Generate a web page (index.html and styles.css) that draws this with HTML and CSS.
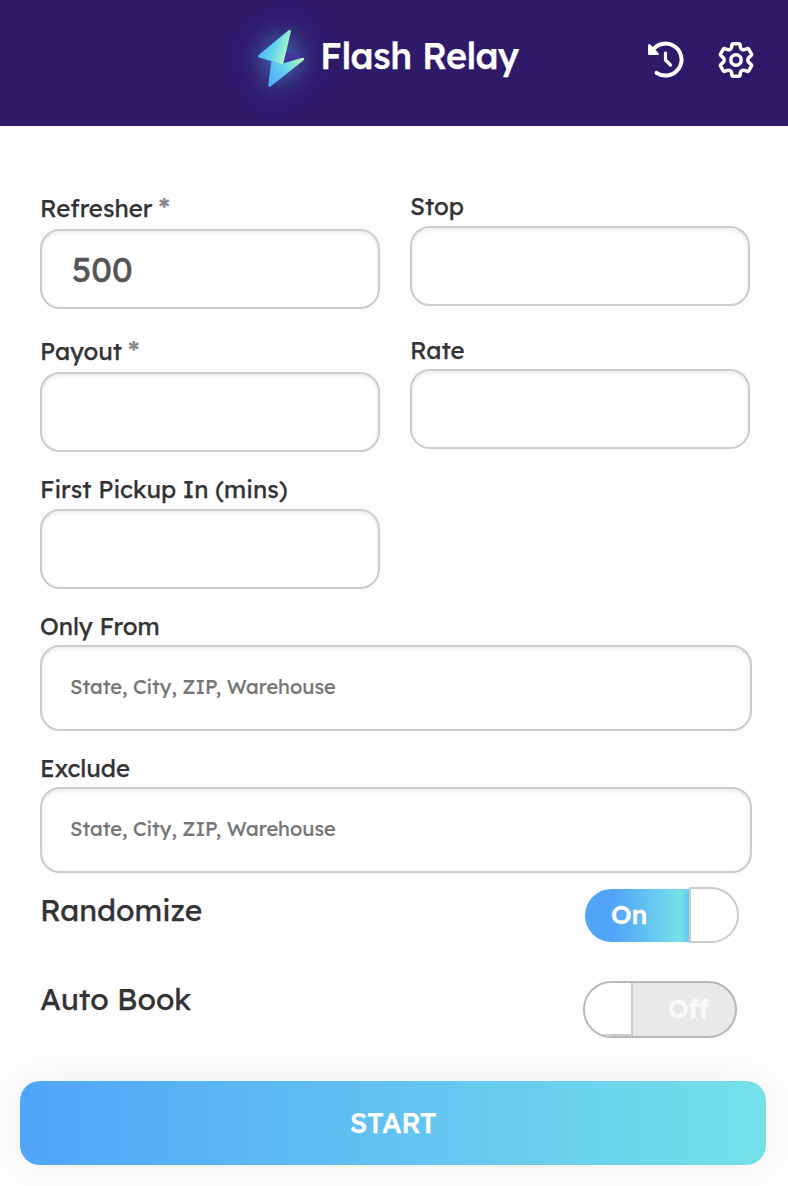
FILE: index.html
```
<!DOCTYPE html>
<html lang="en">
<head>
<meta charset="utf-8">
<title>Flash Relay</title>
<link rel="stylesheet" href="styles.css">
</head>
<body>
<header class="header">
  <div class="brand">
    <svg class="logo" width="50" height="62" viewBox="256 28 50 62">
      <defs>
        <linearGradient id="top" x1="262" y1="42" x2="287" y2="50" gradientUnits="userSpaceOnUse"><stop offset="0" stop-color="#4fb4f8"/><stop offset=".5" stop-color="#62d4ee"/><stop offset="1" stop-color="#a4f5c8"/></linearGradient>
        <linearGradient id="low" x1="267" y1="82" x2="304" y2="60" gradientUnits="userSpaceOnUse"><stop offset="0" stop-color="#4fa8fb"/><stop offset=".5" stop-color="#62d0ee"/><stop offset="1" stop-color="#b0f8bf"/></linearGradient>
      </defs>
      <path d="M284.500 51L303.500 58L282 65Z" fill="#43349e"/>
      <path d="M272.500 63L282.500 65L302.800 59.200L269.700 85.500Z" fill="url(#low)" stroke="url(#low)" stroke-width="2.800" stroke-linejoin="round"/>
      <path d="M259.500 56.200L289.500 31.400L282 63Z" fill="url(#top)" stroke="url(#top)" stroke-width="2.800" stroke-linejoin="round"/>
    </svg>
    <h1 class="title">Flash Relay</h1>
  </div>
  <nav class="actions">
    <svg width="40" height="40" viewBox="645 40 40 40" fill="none" stroke="#fff" stroke-linecap="round" stroke-linejoin="round">
      <path d="M656.500 72.800A16 16 0 1 0 652 51" stroke-width="4"/>
      <path d="M649.300 45.500V53.800H657.500Z" fill="#fff" stroke-width="2.600"/>
      <path d="M665.500 53V60L670.500 65" stroke-width="3.200"/>
    </svg>
    <svg width="40" height="40" viewBox="-20 -20 40 40" fill="none" stroke="#fff" stroke-width="3.500" stroke-linejoin="round">
      <path d="M-2.900 -16.300H2.900Q3.800 -16.300 4 -15.400L4.500 -12.600Q4.800 -11.200 6 -10.500Q7.200 -9.900 8.500 -10.300L11.300 -11.300Q12.200 -11.600 12.700 -10.800L15.500 -5.900Q15.900 -5.100 15.200 -4.500L12.800 -2.400Q11.800 -1.500 11.800 0Q11.800 1.500 12.800 2.400L15.200 4.500Q15.900 5.100 15.500 5.900L12.700 10.800Q12.200 11.600 11.300 11.300L8.500 10.300Q7.200 9.900 6 10.500Q4.800 11.200 4.500 12.600L4 15.400Q3.800 16.300 2.900 16.300H-2.900Q-3.800 16.300 -4 15.400L-4.500 12.600Q-4.800 11.200 -6 10.500Q-7.200 9.900 -8.500 10.300L-11.300 11.300Q-12.200 11.600 -12.700 10.800L-15.500 5.900Q-15.900 5.100 -15.200 4.500L-12.800 2.400Q-11.800 1.500 -11.800 0Q-11.800 -1.500 -12.800 -2.400L-15.200 -4.500Q-15.900 -5.100 -15.500 -5.900L-12.700 -10.800Q-12.200 -11.600 -11.300 -11.300L-8.500 -10.300Q-7.200 -9.900 -6 -10.500Q-4.800 -11.200 -4.500 -12.600L-4 -15.400Q-3.800 -16.300 -2.900 -16.300Z"/>
      <circle r="5.200"/>
    </svg>
  </nav>
</header>
<main class="form">
  <div class="columns">
    <div class="column required-column">
      <label class="field"><span class="label">Refresher <span class="star">*</span></span><input class="input" value="500"></label>
      <label class="field"><span class="label">Payout <span class="star">*</span></span><input class="input"></label>
      <label class="field pickup"><span class="label">First Pickup In (mins)</span><input class="input"></label>
    </div>
    <div class="column optional-column">
      <label class="field"><span class="label">Stop</span><input class="input"></label>
      <label class="field"><span class="label rate">Rate</span><input class="input"></label>
    </div>
  </div>
  <label class="field wide"><span class="label">Only From</span><input class="input" placeholder="State, City, ZIP, Warehouse"></label>
  <label class="field wide"><span class="label">Exclude</span><input class="input" placeholder="State, City, ZIP, Warehouse"></label>
  <div class="option randomize"><span class="option-name">Randomize</span><div class="switch on"><span class="state">On</span><span class="knob"></span></div></div>
  <div class="option autobook"><span class="option-name">Auto Book</span><div class="switch off"><span class="knob"></span><span class="state">Off</span></div></div>
</main>
<footer class="footer"><button class="start">START</button></footer>
</body>
</html>
```
FILE: styles.css
```
* { box-sizing: border-box; }
body { margin: 0; width: 788px; height: 1186px; overflow: hidden; background: #fdfdff; color: #333; font-family: Lexend, Inter, sans-serif; font-weight: 450; -webkit-text-stroke: .25px currentColor; }
.header { height: 126px; background: #2f1a6a; display: flex; justify-content: space-between; padding: 28px 32px 0 256px; }
.brand { display: flex; gap: 14px; }
.logo { overflow: visible; filter: drop-shadow(0 0 14px rgba(85,170,240,.8)); }
.title { margin: 6px 0 0; color: #fff; font-size: 36px; line-height: 44px; font-weight: 500; letter-spacing: -.4px; white-space: nowrap; }
.actions { display: flex; gap: 31px; padding-top: 12px; }
.form { padding: 67px 36px 0 40px; }
.columns { display: flex; gap: 30px; height: 396px; }
.column { width: 340px; }
.field { display: block; }
.label { display: flex; align-items: center; height: 30px; font-size: 24px; white-space: nowrap; }
.star { color: #888; font-size: 28px; margin-left: 6px; font-weight: 500; line-height: 24px; padding-top: 1px; -webkit-text-stroke-width: .2px; }
.required-column { padding-top: 1px; }
.required-column .field { height: 143px; }
.required-column .label { height: 35px; padding-bottom: 8px; }
.required-column .pickup { margin-top: -4px; padding-top: 1px; }
.required-column .pickup .label { height: 32px; padding-bottom: 9px; }
.optional-column .field { height: 143px; }
.optional-column .label { height: 33px; padding-bottom: 8px; }
.optional-column .rate { padding-bottom: 6px; }
.input { display: block; width: 100%; height: 80px; border: 2px solid #ccc; border-radius: 20px; background: #fff; box-shadow: inset 0 2px 4px rgba(0,0,0,.09); padding: 0 30px; font: inherit; font-size: 34px; color: #555; -webkit-text-stroke-width: .5px; outline: 0; }
.wide { height: 142px; }
.wide .label { height: 56px; padding-top: 18px; }
.wide .input { height: 86px; padding: 0 28px 4px; font-size: 20px; -webkit-text-stroke-width: .2px; }
.wide .input::placeholder { color: #757575; opacity: 1; }
.option { display: flex; justify-content: space-between; padding-right: 13px; height: 94px; padding-top: 14px; }
.option-name { font-size: 30px; line-height: 46px; }
.autobook { padding-right: 15px; }
.autobook .option-name { line-height: 36px; }
.switch { display: flex; color: #fff; font-size: 26px; font-weight: 550; width: 154px; -webkit-text-stroke-width: .4px; }
.state { display: flex; align-items: center; }
.on .state { width: 104px; height: 53px; margin-top: 2px; padding-left: 26px; padding-bottom: 3px; border-radius: 27px 0 0 27px; background: linear-gradient(90deg,#50a5f8 28%,#74e1e9 92%,#64c5f0); }
.on .knob { width: 50px; height: 56px; border: 2px solid #ccc; background: #fff; border-radius: 0 28px 28px 0; }
.off { height: 57px; border: 2px solid #b8b8b8; border-radius: 29px; background: #e8eaea; overflow: hidden; }
.off .knob { width: 48px; height: 53px; border-right: 2px solid #ccc; border-bottom: 2px solid #ccc; background: #fff; }
.off .state { padding-left: 35px; padding-bottom: 3px; color: #fafafa; }
.footer { position: absolute; top: 1061px; left: 20px; width: 746px; height: 125px; padding-top: 20px; background: #fdfdfd; }
.start { display: block; width: 746px; height: 84px; border: 0; border-radius: 20px; background: linear-gradient(90deg,#50a5f8,#74e1e9); box-shadow: 0 0 36px rgba(0,0,0,.06); color: #fff; font: inherit; font-size: 28px; font-weight: 500; letter-spacing: -.4px; padding: 0 0 2px; }
```
